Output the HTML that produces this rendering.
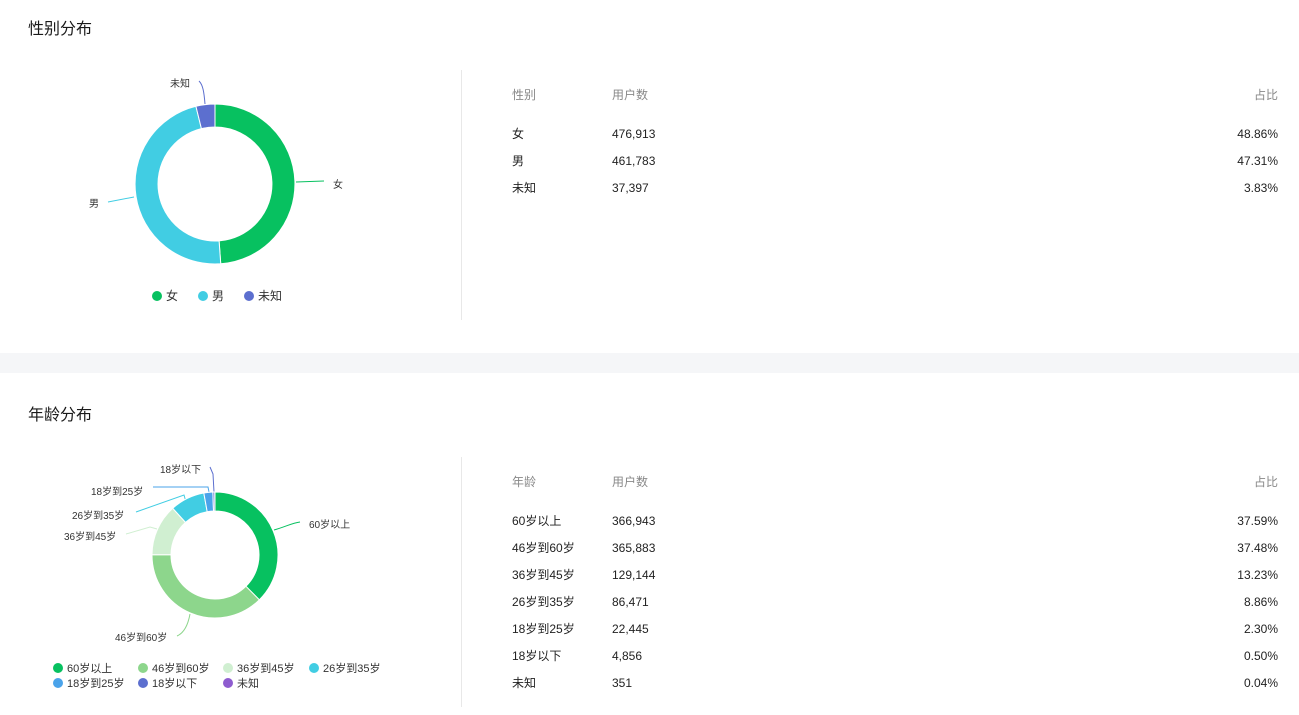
<!DOCTYPE html><html><head><meta charset="utf-8"><style>
body{margin:0;width:1299px;height:715px;background:#fff;font-family:"Liberation Sans","Noto Sans CJK SC",sans-serif;color:#222;position:relative;overflow:hidden}
.a{position:absolute;line-height:16px}
.t{font-size:16px;color:#1a1a1a;line-height:20px}
.h{font-size:12px;color:#888}
.r{font-size:12px;color:#222}
.rt{right:21px;text-align:right}
.lg{font-size:11px;color:#333;white-space:nowrap}
.dot{display:inline-block;width:10px;height:10px;border-radius:50%;vertical-align:-1px;margin-right:4px}
</style></head><body>
<div class="a t" style="left:28px;top:20px">性别分布</div>
<div class="a" style="left:461px;top:70px;width:1px;height:250px;background:#e8e8e8"></div>
<div class="a" style="left:0;top:353px;width:1299px;height:20px;background:#f5f6f8"></div>
<div class="a t" style="left:28px;top:406px">年龄分布</div>
<div class="a" style="left:461px;top:457px;width:1px;height:250px;background:#e8e8e8"></div>
<svg class="a" style="left:0;top:0" width="461" height="715" id="s">
<g font-size="10" fill="#333" font-family="Liberation Sans,Noto Sans CJK SC,sans-serif">
<path d="M296 182 L324 181" stroke="#07c160" fill="none"/><text x="333" y="188">女</text>
<path d="M134 197 L108 202" stroke="#41cde3" fill="none"/><text x="89" y="207">男</text>
<path d="M205 104 C204 92 203 85 199 81" stroke="#5c6fcf" fill="none"/><text x="170" y="87">未知</text>
<path d="M274 530 C285 527 292 523 300 522" stroke="#07c160" fill="none"/><text x="309" y="528">60岁以上</text>
<path d="M190 614 C188 625 184 633 177 636" stroke="#8dd68c" fill="none"/><text x="115" y="641">46岁到60岁</text>
<path d="M157 529 L150 527 L126 534" stroke="#d0efd1" fill="none"/><text x="64" y="540">36岁到45岁</text>
<path d="M186 502 L184 495 L136 512" stroke="#41cde3" fill="none"/><text x="72" y="519">26岁到35岁</text>
<path d="M209 492 L208 487 L153 487" stroke="#4aa3ea" fill="none"/><text x="91" y="495">18岁到25岁</text>
<path d="M214 492 L213 474 L210 467" stroke="#5c6fcf" fill="none"/><text x="160" y="473">18岁以下</text>
</g></svg>
<div class="a lg" style="left:152px;top:288px;font-size:12px"><span class="dot" style="background:#07c160"></span>女&nbsp;&nbsp;&nbsp;&nbsp;&nbsp;&nbsp;<span class="dot" style="background:#41cde3"></span>男&nbsp;&nbsp;&nbsp;&nbsp;&nbsp;&nbsp;<span class="dot" style="background:#5c6fcf"></span>未知</div>
<div class="a lg" style="left:53px;top:661px"><span class="dot" style="background:#07c160"></span>60岁以上</div>
<div class="a lg" style="left:138px;top:661px"><span class="dot" style="background:#8dd68c"></span>46岁到60岁</div>
<div class="a lg" style="left:223px;top:661px"><span class="dot" style="background:#d0efd1"></span>36岁到45岁</div>
<div class="a lg" style="left:309px;top:661px"><span class="dot" style="background:#41cde3"></span>26岁到35岁</div>
<div class="a lg" style="left:53px;top:676px"><span class="dot" style="background:#4aa3ea"></span>18岁到25岁</div>
<div class="a lg" style="left:138px;top:676px"><span class="dot" style="background:#5c6fcf"></span>18岁以下</div>
<div class="a lg" style="left:223px;top:676px"><span class="dot" style="background:#8e5ccf"></span>未知</div>
<div id="tb"></div>
<script>
function donut(cx,cy,R,r,fr,cols){var s=document.getElementById('s'),a=-Math.PI/2,h='';
for(var i=0;i<fr.length;i++){var b=a+fr[i]*2*Math.PI,l=(b-a)>Math.PI?1:0;
function p(rad,ang){return (cx+rad*Math.cos(ang)).toFixed(2)+' '+(cy+rad*Math.sin(ang)).toFixed(2)}
h+='<path d="M'+p(R,a)+' A'+R+' '+R+' 0 '+l+' 1 '+p(R,b)+' L'+p(r,b)+' A'+r+' '+r+' 0 '+l+' 0 '+p(r,a)+'Z" fill="'+cols[i]+'" stroke="#fff" stroke-width="1"/>';a=b;}
s.insertAdjacentHTML('beforeend',h);}
donut(215,184,80,57,[.4886,.4731,.0383],['#07c160','#41cde3','#5c6fcf']);
donut(215,555,63,44,[.3759,.3748,.1323,.0886,.0230,.0050,.0004],['#07c160','#8dd68c','#d0efd1','#41cde3','#4aa3ea','#5c6fcf','#8e5ccf']);
var h='';
function tbl(y,hd,rows){h+='<div class="a h" style="left:512px;top:'+y+'px">'+hd+'</div><div class="a h" style="left:612px;top:'+y+'px">用户数</div><div class="a h rt" style="top:'+y+'px">占比</div>';
rows.forEach(function(r,i){var yy=y+39+i*27;h+='<div class="a r" style="left:512px;top:'+yy+'px">'+r[0]+'</div><div class="a r" style="left:612px;top:'+yy+'px">'+r[1]+'</div><div class="a r rt" style="top:'+yy+'px">'+r[2]+'</div>';});}
tbl(87,'性别',[['女','476,913','48.86%'],['男','461,783','47.31%'],['未知','37,397','3.83%']]);
tbl(474,'年龄',[['60岁以上','366,943','37.59%'],['46岁到60岁','365,883','37.48%'],['36岁到45岁','129,144','13.23%'],['26岁到35岁','86,471','8.86%'],['18岁到25岁','22,445','2.30%'],['18岁以下','4,856','0.50%'],['未知','351','0.04%']]);
document.getElementById('tb').innerHTML=h;
</script>
</body></html>
